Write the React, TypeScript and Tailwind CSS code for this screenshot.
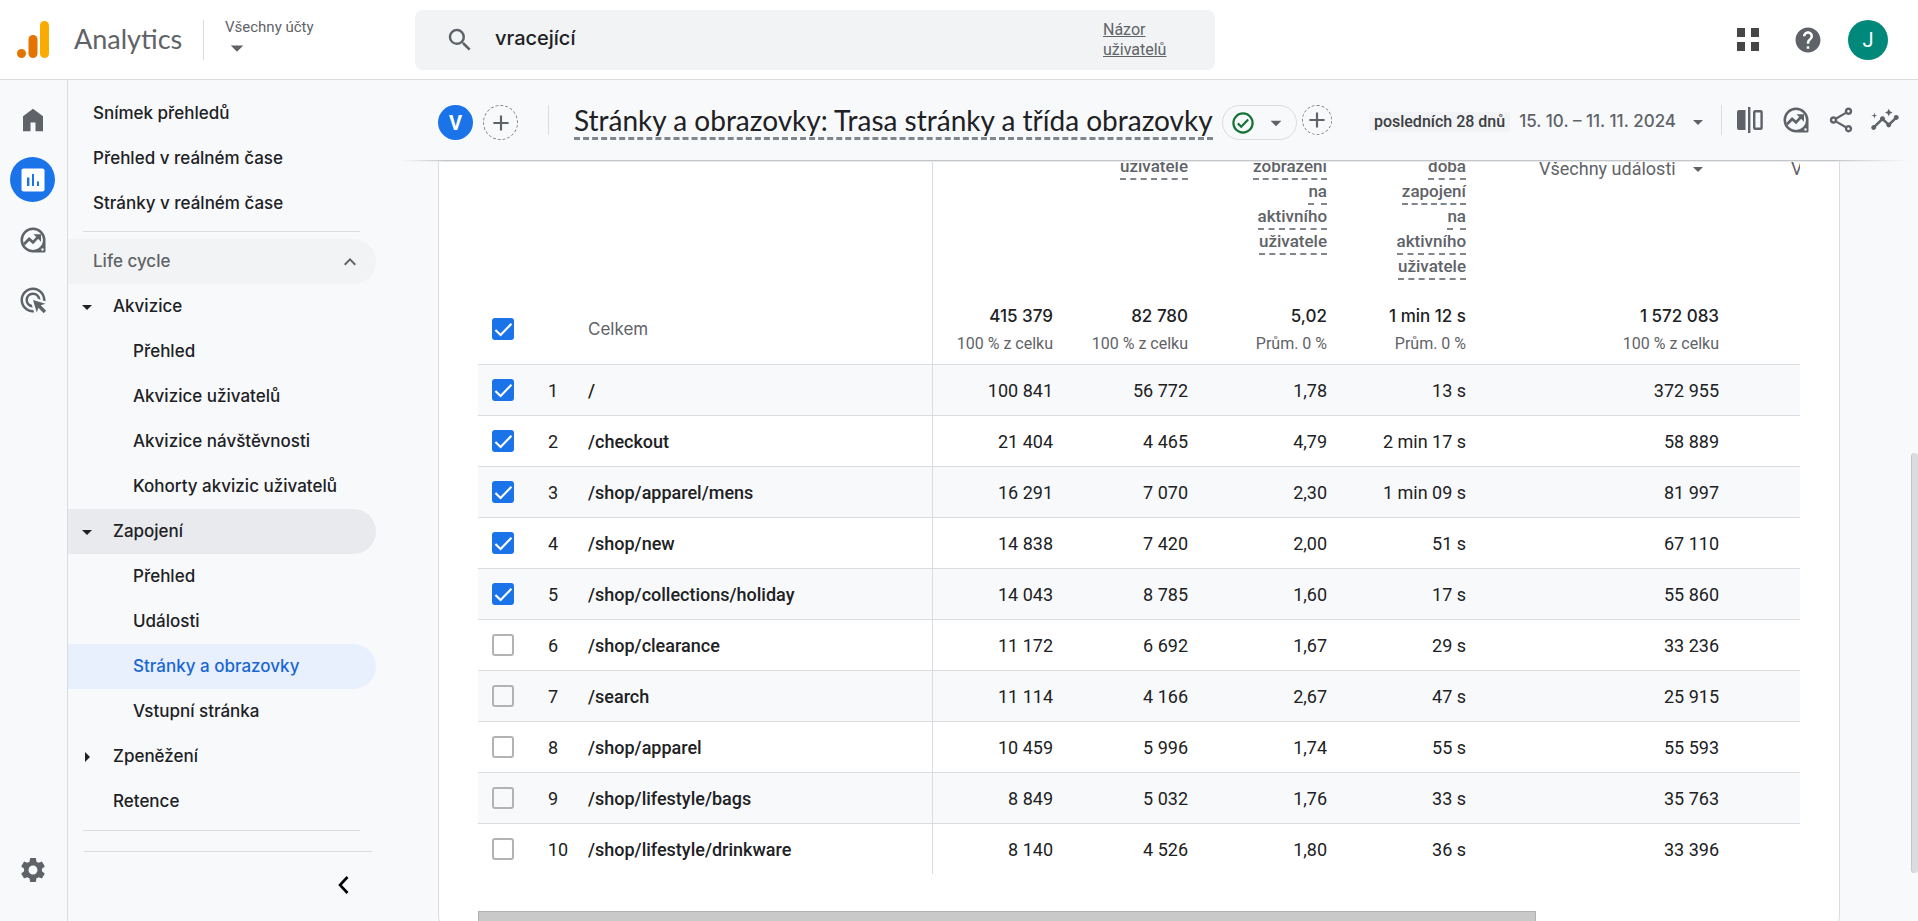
import * as React from 'react';
import clsx from 'clsx';
import {
  MdAdd,
  MdAdsClick,
  MdArrowDropDown,
  MdArrowRight,
  MdHelp,
  MdInsights,
  MdKeyboardArrowUp,
  MdOutlineShare,
  MdSearch,
  MdSettings,
} from 'react-icons/md';

type NavItem = {
  label: string;
  level: 1 | 2;
  arrow?: 'down' | 'right';
  state?: 'open' | 'active';
};

const TOP_LINKS = ['Snímek přehledů', 'Přehled v reálném čase', 'Stránky v reálném čase'];

const LIFE_CYCLE: NavItem[] = [
  { label: 'Akvizice', level: 1, arrow: 'down' },
  { label: 'Přehled', level: 2 },
  { label: 'Akvizice uživatelů', level: 2 },
  { label: 'Akvizice návštěvnosti', level: 2 },
  { label: 'Kohorty akvizic uživatelů', level: 2 },
  { label: 'Zapojení', level: 1, arrow: 'down', state: 'open' },
  { label: 'Přehled', level: 2 },
  { label: 'Události', level: 2 },
  { label: 'Stránky a obrazovky', level: 2, state: 'active' },
  { label: 'Vstupní stránka', level: 2 },
  { label: 'Zpeněžení', level: 1, arrow: 'right' },
  { label: 'Retence', level: 1 },
];

const TOTALS = [
  ['415 379', '100 % z celku'],
  ['82 780', '100 % z celku'],
  ['5,02', 'Prům. 0 %'],
  ['1 min 12 s', 'Prům. 0 %'],
  ['1 572 083', '100 % z celku'],
];

const ROWS = [
  { path: '/', checked: true, values: ['100 841', '56 772', '1,78', '13 s', '372 955'] },
  { path: '/checkout', checked: true, values: ['21 404', '4 465', '4,79', '2 min 17 s', '58 889'] },
  { path: '/shop/apparel/mens', checked: true, values: ['16 291', '7 070', '2,30', '1 min 09 s', '81 997'] },
  { path: '/shop/new', checked: true, values: ['14 838', '7 420', '2,00', '51 s', '67 110'] },
  { path: '/shop/collections/holiday', checked: true, values: ['14 043', '8 785', '1,60', '17 s', '55 860'] },
  { path: '/shop/clearance', checked: false, values: ['11 172', '6 692', '1,67', '29 s', '33 236'] },
  { path: '/search', checked: false, values: ['11 114', '4 166', '2,67', '47 s', '25 915'] },
  { path: '/shop/apparel', checked: false, values: ['10 459', '5 996', '1,74', '55 s', '55 593'] },
  { path: '/shop/lifestyle/bags', checked: false, values: ['8 849', '5 032', '1,76', '33 s', '35 763'] },
  { path: '/shop/lifestyle/drinkware', checked: false, values: ['8 140', '4 526', '1,80', '36 s', '33 396'] },
];

function Logo() {
  return (
    <svg viewBox="0 0 32 37" className="h-[37px] w-8" aria-hidden>
      <rect x="23" y="0" width="9" height="37" rx="4.5" fill="#f9ab00" />
      <rect x="11.5" y="14" width="9" height="23" rx="4.5" fill="#e37400" />
      <circle cx="4.5" cy="32.5" r="4.5" fill="#e37400" />
    </svg>
  );
}

function HomeIcon() {
  return (
    <svg viewBox="0 0 24 24" className="size-[30px]" fill="currentColor" aria-hidden>
      <path d="M4 21V9l8-6 8 6v12h-6v-7h-4v7z" />
    </svg>
  );
}

function ReportsIcon() {
  return (
    <svg viewBox="0 0 24 24" className="size-6" aria-hidden>
      <rect x="0.5" y="0.5" width="23" height="23" rx="2" fill="#fff" />
      <path d="M6 9.5h2.4V18H6zM11 6h2v12h-2zM16 13.5h2V18h-2z" fill="#1a73e8" />
    </svg>
  );
}

function ExploreIcon() {
  return (
    <svg viewBox="0 0 24 24" className="size-[30px]" fill="currentColor" aria-hidden>
      <path
        fillRule="evenodd"
        d="M12 2a10 10 0 0 0 0 20h9a1 1 0 0 0 1-1v-9A10 10 0 0 0 12 2zm0 2a8 8 0 1 1 0 16 8 8 0 0 1 0-16zm7.6 14.6a1 1 0 1 1 0 2 1 1 0 0 1 0-2z"
      />
      <path d="M4.8 15.4 8.9 11.2l3.1 2.7 4.6-5" fill="none" stroke="currentColor" strokeWidth="2.2" />
      <path d="M12.4 7.4h6v6z" />
    </svg>
  );
}

function CompareIcon() {
  return (
    <svg viewBox="0 0 26 26" className="size-[26px]" fill="currentColor" aria-hidden>
      <path d="M2 3h6.5v20H2a2 2 0 0 1-2-2V5a2 2 0 0 1 2-2zM11 0h2.4v26H11z" />
      <rect x="17.2" y="4.2" width="7.4" height="17.6" rx="1" fill="none" stroke="currentColor" strokeWidth="2.4" />
    </svg>
  );
}

function StatusIcon() {
  return (
    <svg viewBox="0 0 22 22" className="size-[22px]" fill="none" stroke="#137333" strokeWidth="2.2" aria-hidden>
      <circle cx="11" cy="11" r="9.6" />
      <path d="m5.8 11.4 3.4 3.4 7-7.2" />
    </svg>
  );
}

function Checkbox({ id, label, checked }: { id: string; label: string; checked: boolean }) {
  return (
    <label htmlFor={id} className="grid w-[22px] place-items-center">
      <input
        id={id}
        type="checkbox"
        defaultChecked={checked}
        aria-label={label}
        className="peer col-start-1 row-start-1 size-[22px] appearance-none rounded-[3px] border-2 border-[#b3b3b3] checked:border-[#1a73e8] checked:bg-[#1a73e8]"
      />
      <svg
        viewBox="0 0 22 22"
        className="pointer-events-none col-start-1 row-start-1 hidden size-[22px] peer-checked:block"
        fill="none"
        stroke="#fff"
        strokeWidth="2.2"
        aria-hidden
      >
        <path d="m3.4 12 5.2 5L19.4 5.8" />
      </svg>
    </label>
  );
}

function Header() {
  return (
    <header className="flex h-20 shrink-0 items-center border-b border-[#dadce0] bg-white pr-[30px] text-[#5f6368]">
      <a href="#home" className="flex w-[203px] shrink-0 items-center gap-[25px] pl-[17px] font-[Lato,sans-serif] text-[27px]">
        <Logo />
        Analytics
      </a>
      <div className="h-10 w-px shrink-0 bg-[#dadce0]" />
      <button type="button" className="flex w-[211px] shrink-0 flex-col items-start pl-[21px] text-left text-[15px] leading-5">
        Všechny účty
        <MdArrowDropDown className="-mt-1 -ml-[3px] size-[30px]" />
      </button>
      <div className="flex h-[60px] w-[800px] items-center rounded-lg bg-[#f1f3f4] pr-[42px] pl-[30px]">
        <MdSearch className="size-[30px] shrink-0" />
        <input
          type="text"
          aria-label="Hledat"
          defaultValue="vracející"
          className="min-w-0 flex-1 bg-transparent pb-1 pl-5 font-[Inter,sans-serif] text-xl font-medium text-[#202124] outline-none"
        />
        <a href="#feedback" className="w-[70px] text-base leading-5 underline">
          Názor uživatelů
        </a>
      </div>
      <div className="ml-auto flex items-center">
        <button type="button" aria-label="Aplikace" className="mr-[34px] grid grid-cols-2 gap-x-[6px] gap-y-[5px]">
          {[0, 1, 2, 3].map((i) => (
            <span key={i} className="h-[9px] w-2 bg-[#444746]" />
          ))}
        </button>
        <button type="button" aria-label="Nápověda" className="mr-[25px]">
          <MdHelp className="size-[30px]" />
        </button>
        <button type="button" aria-label="Účet" className="grid size-10 place-items-center rounded-full bg-[#00897b] text-xl text-white">
          J
        </button>
      </div>
    </header>
  );
}

function Rail() {
  return (
    <nav aria-label="Sekce" className="flex w-[68px] shrink-0 flex-col items-center gap-[15px] border-r border-[#dadce0] pt-[17px] pr-[2px] pb-9 text-[#5f6368]">
      <a href="#home" aria-label="Domů" className="grid h-[45px] place-items-center">
        <HomeIcon />
      </a>
      <a href="#reports" aria-label="Přehledy" className="grid size-[45px] place-items-center rounded-full bg-[#1a73e8]">
        <ReportsIcon />
      </a>
      <a href="#explore" aria-label="Průzkum" className="grid h-[45px] place-items-center">
        <ExploreIcon />
      </a>
      <a href="#ads" aria-label="Inzerce" className="grid h-[45px] place-items-center">
        <MdAdsClick className="size-[30px]" />
      </a>
      <a href="#admin" aria-label="Správce" className="mt-auto">
        <MdSettings className="size-[30px]" />
      </a>
    </nav>
  );
}

function Sidebar() {
  return (
    <nav aria-label="Přehledy" className="flex w-[308px] shrink-0 flex-col pt-[11px] pb-[26px] font-[Inter,sans-serif] text-[17px] font-medium text-[#202124]">
      {TOP_LINKS.map((label) => (
        <a key={label} href="#report" className="flex h-[45px] shrink-0 items-center pl-[25px]">
          {label}
        </a>
      ))}
      <hr className="mt-[5px] mr-4 mb-[7px] ml-[15px] border-[#dadce0]" />
      <button type="button" className="flex h-[45px] shrink-0 items-center justify-between rounded-r-full bg-[#f1f3f4] pr-[14px] pl-[25px] text-[#5f6368]">
        Life cycle
        <MdKeyboardArrowUp className="size-6" />
      </button>
      {LIFE_CYCLE.map((item, i) => (
        <a
          key={i}
          href="#report"
          className={clsx(
            'flex h-[45px] shrink-0 items-center rounded-r-full',
            item.level === 2 ? 'pl-[65px]' : 'pl-[7px]',
            item.state === 'open' && 'bg-[#e8eaed]',
            item.state === 'active' && 'bg-[#e8f0fe] text-[#1967d2]',
          )}
        >
          {item.level === 1 && (
            <span className="w-[38px]">
              {item.arrow === 'down' && <MdArrowDropDown className="size-6" />}
              {item.arrow === 'right' && <MdArrowRight className="size-6" />}
            </span>
          )}
          {item.label}
        </a>
      ))}
      <hr className="mt-[6px] mr-4 ml-[15px] border-[#dadce0]" />
      <hr className="mt-5 mr-1 ml-4 border-[#dadce0]" />
      <button type="button" aria-label="Sbalit" className="mt-auto mr-[26px] self-end text-black">
        <svg viewBox="0 0 14 20" className="h-5 w-[14px]" fill="none" stroke="currentColor" strokeWidth="2.6" aria-hidden>
          <path d="M11.5 2 4 10l7.5 8" />
        </svg>
      </button>
    </nav>
  );
}

function ReportBar() {
  return (
    <div className="relative flex h-20 shrink-0 items-center pr-[18px] pl-[62px] text-[#5f6368]">
      <button type="button" className="mt-[5px] size-[35px] shrink-0 rounded-full bg-[#1a73e8] text-xl leading-none font-bold text-white">
        V
      </button>
      <button type="button" aria-label="Přidat porovnání" className="mt-[5px] ml-[10px] grid size-[35px] shrink-0 place-items-center rounded-full border border-dashed border-[#80868b]">
        <MdAdd className="size-[26px]" />
      </button>
      <div className="ml-[30px] h-[30px] w-px shrink-0 bg-[#dadce0]" />
      <h1 className="mt-[3px] ml-[25px] border-b-[3px] border-dashed border-[#80868b] pb-px font-[Lato,sans-serif] text-[28px] leading-8 whitespace-nowrap text-[#202124]">
        Stránky a obrazovky: Trasa stránky a třída obrazovky
      </h1>
      <button type="button" aria-label="Stav dat" className="mt-[5px] ml-[9px] flex h-[35px] w-[75px] shrink-0 items-center justify-between rounded-full border border-[#dadce0] pr-[7px] pl-[9px]">
        <StatusIcon />
        <MdArrowDropDown className="size-[26px]" />
      </button>
      <button type="button" aria-label="Přidat filtr" className="ml-[5px] grid size-[30px] shrink-0 place-items-center rounded-full border border-dashed border-[#80868b]">
        <MdAdd className="size-[26px]" />
      </button>
      <button type="button" className="mt-[3px] ml-auto flex shrink-0 items-center font-[Inter,sans-serif] text-[17px] font-medium">
        <span className="mr-[9px] bg-[#f1f3f4] px-[5px] font-[Roboto,sans-serif] text-base leading-5 text-[#3c4043]">
          posledních 28 dnů
        </span>
        15. 10. – 11. 11. 2024
        <MdArrowDropDown className="ml-[10px] size-6" />
      </button>
      <div className="ml-[11px] h-[30px] w-px shrink-0 bg-[#dadce0]" />
      <div className="ml-[15px] flex shrink-0 items-center">
        <button type="button" aria-label="Porovnat">
          <CompareIcon />
        </button>
        <button type="button" aria-label="Průzkum" className="ml-[18px]">
          <ExploreIcon />
        </button>
        <button type="button" aria-label="Sdílet" className="ml-[15px]">
          <MdOutlineShare className="size-[30px]" />
        </button>
        <button type="button" aria-label="Statistiky" className="ml-[14px]">
          <MdInsights className="size-[30px]" />
        </button>
      </div>
      {/* scroll shadow, faded out at both ends */}
      <div className="absolute top-full right-2 left-6 h-px bg-[linear-gradient(to_right,transparent,#c4c7ca_3%,#c4c7ca_95%,transparent)]" />
      <div className="absolute top-full right-2 left-6 mt-px h-px bg-[linear-gradient(to_right,transparent,#e8eaec_3%,#e8eaec_95%,transparent)]" />
    </div>
  );
}

function MetricHead({ words }: { words: string[] }) {
  return (
    <th scope="col" className="pt-[2px] pr-[15px] align-top text-[17px] font-medium">
      <div className="flex flex-col items-end">
        {words.map((word) => (
          <span key={word} className="border-b-2 border-dashed border-[#80868b] leading-[23px]">
            {word}
          </span>
        ))}
      </div>
    </th>
  );
}

function EventHead({ label }: { label: string }) {
  return (
    <th scope="col" className="pt-[2px] pl-[58px] text-left align-top font-normal">
      <button type="button" className="flex items-center gap-[10px] whitespace-nowrap">
        {label}
        <MdArrowDropDown className="size-6" />
      </button>
    </th>
  );
}

function ReportTable() {
  return (
    <div className="overflow-hidden">
      <table className="w-[1557px] table-fixed border-collapse text-lg text-[#202124]">
        <colgroup>
          <col className="w-[70px]" />
          <col className="w-10" />
          <col className="w-[344px]" />
          <col className="w-[136px]" />
          <col className="w-[135px]" />
          <col className="w-[139px]" />
          <col className="w-[139px]" />
          <col className="w-[252px]" />
          <col className="w-[302px]" />
        </colgroup>
        <thead>
          <tr className="h-[141px] text-[#5f6368]">
            <td colSpan={3} className="border-r border-[#dadce0]" />
            <MetricHead words={[]} />
            <MetricHead words={['uživatelé']} />
            <MetricHead words={['zobrazení', 'na', 'aktivního', 'uživatele']} />
            <MetricHead words={['doba', 'zapojení', 'na', 'aktivního', 'uživatele']} />
            <EventHead label="Všechny události" />
            <EventHead label="Všechny události" />
          </tr>
        </thead>
        <tbody>
          <tr className="h-[70px] border-b border-[#dadce0]">
            <td className="pl-[14px]">
              <Checkbox id="row-total" label="Celkem" checked />
            </td>
            <td />
            <td className="border-r border-[#dadce0] font-[Inter,sans-serif] text-[17px] text-[#5f6368]">Celkem</td>
            {TOTALS.map(([value, note], i) => (
              <td key={i} className={clsx('pt-[2px] text-right', i === 4 ? 'pr-[14px]' : 'pr-[15px]')}>
                <div className="font-[Inter,sans-serif] text-[17px] leading-7 font-medium">{value}</div>
                <div className="text-base leading-7 text-[#5f6368]">{note}</div>
              </td>
            ))}
            <td />
          </tr>
          {ROWS.map((row, i) => (
            <tr key={row.path} className="h-[51px] border-b border-[#dadce0] odd:bg-white even:bg-[#f8f9fa] last:border-b-0">
              <td className="pl-[14px]">
                <Checkbox id={`row-${i + 1}`} label={row.path} checked={row.checked} />
              </td>
              <td className="pt-[2px]">{i + 1}</td>
              <td className="border-r border-[#dadce0] pt-[2px] font-medium">{row.path}</td>
              {row.values.map((value, j) => (
                <td key={j} className={clsx('pt-[2px] text-right', j === 4 ? 'pr-[14px]' : 'pr-[15px]')}>
                  {value}
                </td>
              ))}
              <td />
            </tr>
          ))}
        </tbody>
      </table>
    </div>
  );
}

export default function App() {
  return (
    <div className="flex h-screen flex-col overflow-hidden bg-[#f8f9fb] font-[Roboto,sans-serif]">
      <Header />
      <div className="flex min-h-0 flex-1">
        <Rail />
        <Sidebar />
        <main className="flex min-w-0 flex-1 flex-col">
          <ReportBar />
          <div className="flex min-h-0 flex-1 overflow-hidden pl-[62px]">
            <section className="flex min-w-0 flex-1 flex-col self-start rounded-b-xl border border-t-0 border-[#dadce0] bg-white px-[39px] pb-1">
              <div className="-mt-[7px]">
                <ReportTable />
              </div>
              <div className="mt-[37px] h-3">
                <div className="h-full w-4/5 border border-[#b0b0b0] bg-[#c9c9c9]" />
              </div>
            </section>
            <div className="flex w-[78px] shrink-0 justify-end pt-[293px]">
              <div className="h-[420px] w-[7px] rounded-sm border-l border-[#c4c7c9] bg-[#dadce0]" />
            </div>
          </div>
        </main>
      </div>
    </div>
  );
}
